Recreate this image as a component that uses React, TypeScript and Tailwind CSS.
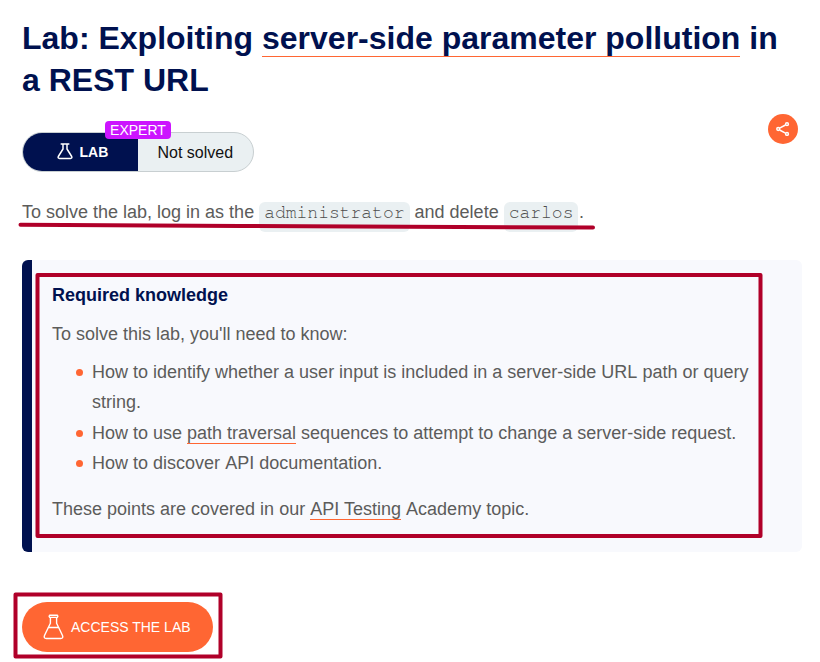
import type { ReactNode } from "react";

function TextLink({ children, className = "" }: { children: ReactNode; className?: string }) {
  return (
    <a href="#" className={`border-b border-[#ff6633] ${className}`}>
      {children}
    </a>
  );
}

function Code({ children }: { children: ReactNode }) {
  return (
    <code className="rounded-[6px] bg-[#eaf0f2] px-[5px] pt-[2px] pb-[10px] font-['Courier_10_Pitch','Nimbus_Mono_PS','FreeMono','Liberation_Mono',monospace] text-[18px] text-[#4c4c4b]">
      {children}
    </code>
  );
}

function Bullet({ children, className = "" }: { children: ReactNode; className?: string }) {
  return (
    <li className={`flex ${className}`}>
      <span className="mt-[12px] mr-[9.25px] ml-[24.25px] size-[6.5px] shrink-0 rounded-full bg-[#ff6633]" />
      <span>{children}</span>
    </li>
  );
}

export default function App() {
  return (
    <main className="relative h-[662px] w-[820px] overflow-hidden bg-white px-[22px] pt-[17px] font-['Liberation_Sans',Arial,sans-serif] text-[18px] leading-[30px] text-[#5c5c5b]">
      <h1 className="text-[32px] leading-[42px] font-bold text-[#00114f]">
        Lab: Exploiting <TextLink>server-side parameter pollution</TextLink> in
        <br />a REST URL
      </h1>

      <div className="mt-[13px] flex h-[58px] justify-between">
        <div className="relative mt-[18px] flex h-[40px] w-[232px] overflow-visible">
          <div className="flex w-full overflow-hidden rounded-full border border-[#c8cfd1] bg-[#eaf0f2]">
            <div className="flex w-[115px] items-center bg-[#00114f] pl-[34px] text-[14px] font-bold text-white">
              <svg width="16" height="17" viewBox="0 0 16 17" fill="none" stroke="white" strokeWidth="1.5" strokeLinejoin="round" strokeLinecap="round" className="-mt-[2px] mr-[6.5px]">
                <path d="M4.2 1h7.6M6 1v5L1.3 13.5Q.6 15.4 2.5 15.4h11q1.9 0 1.2-1.9L10 6V1" />
              </svg>
              LAB
            </div>
            <div className="flex flex-1 items-center pl-[19.5px] pt-px text-[16px] text-[#111]">Not solved</div>
          </div>
          <span className="absolute -top-[11px] left-[83px] h-[18px] w-[66px] rounded-[4px] bg-[#cc14ff] text-center text-[14px] leading-[18px] text-white">
            EXPERT
          </span>
        </div>
        <button className="flex size-[30px] items-center justify-center rounded-full bg-[#ff6633]">
          <svg width="14" height="14" viewBox="0 0 14 14" fill="none" stroke="white" strokeWidth="1.5">
            <path d="M3.6 6.1 9.5 3M3.6 8 9.5 11.1" />
            <circle cx="2.2" cy="7" r="1.4" />
            <circle cx="11" cy="2.2" r="1.4" />
            <circle cx="11" cy="11.9" r="1.4" />
          </svg>
        </button>
      </div>

      <p className="mt-[25px] h-[30px]">
        To solve the lab, log in as the <Code>administrator</Code> and delete <Code>carlos</Code>
        <span className="ml-[0.5px]">.</span>
      </p>

      <section className="mt-[33px] h-[292px] w-[780px] rounded-[6px] border-l-[10px] border-[#00114f] bg-[#f8f9fd] pt-[20px] pl-[20px]">
        <h4 className="font-bold text-[#00114f]">Required knowledge</h4>
        <p className="mt-[9px]">To solve this lab, you'll need to know:</p>
        <ul className="mt-[8px]">
          <Bullet className="mb-px">
            How to identify whether a user input is included in a server-side URL{" "}
            <span className="ml-[0.9px]">path or query</span>
            <br />
            string.
          </Bullet>
          <Bullet>
            How to use <TextLink>path traversal</TextLink> sequences to attempt to change a server-side request.
          </Bullet>
          <Bullet>
            How to discover <span className="ml-[0.1px]">API documentation.</span>
          </Bullet>
        </ul>
        <p className="mt-[16px]">
          These points are covered in our <TextLink className="ml-[0.1px]">API Testing</TextLink>{" "}
          <span className="ml-[0.1px]">Academy</span> topic.
        </p>
      </section>

      <button className="mt-[50px] flex h-[50px] w-[191px] items-center rounded-full bg-[#ff6633] pl-[21px] text-[14px] text-white">
        <svg width="21" height="26" viewBox="0 0 21 26" fill="none" stroke="white" strokeWidth="1.4" strokeLinejoin="round" strokeLinecap="round" className="mr-[7px]">
          <path d="M6.6 1.2h7.8q1 1 0 2.2H6.6q-1-1.2 0-2.2ZM7.4 3.6v5.6L1.5 21.5q-1.1 3 1.8 3h14.4q2.9 0 1.8-3L13.6 9.2V3.6M5.2 13.5h10.6" />
        </svg>
        ACCESS THE LAB
      </button>

      <svg className="pointer-events-none absolute inset-0" width="820" height="662" fill="none" stroke="#b00029" strokeWidth="4" strokeLinecap="round" strokeLinejoin="round">
        <path d="M20.5 224.8 L240 226 L593 227.5" />
        <rect x="37.5" y="275" width="723" height="261" />
        <rect x="15.5" y="594.5" width="205" height="62" />
      </svg>
    </main>
  );
}
